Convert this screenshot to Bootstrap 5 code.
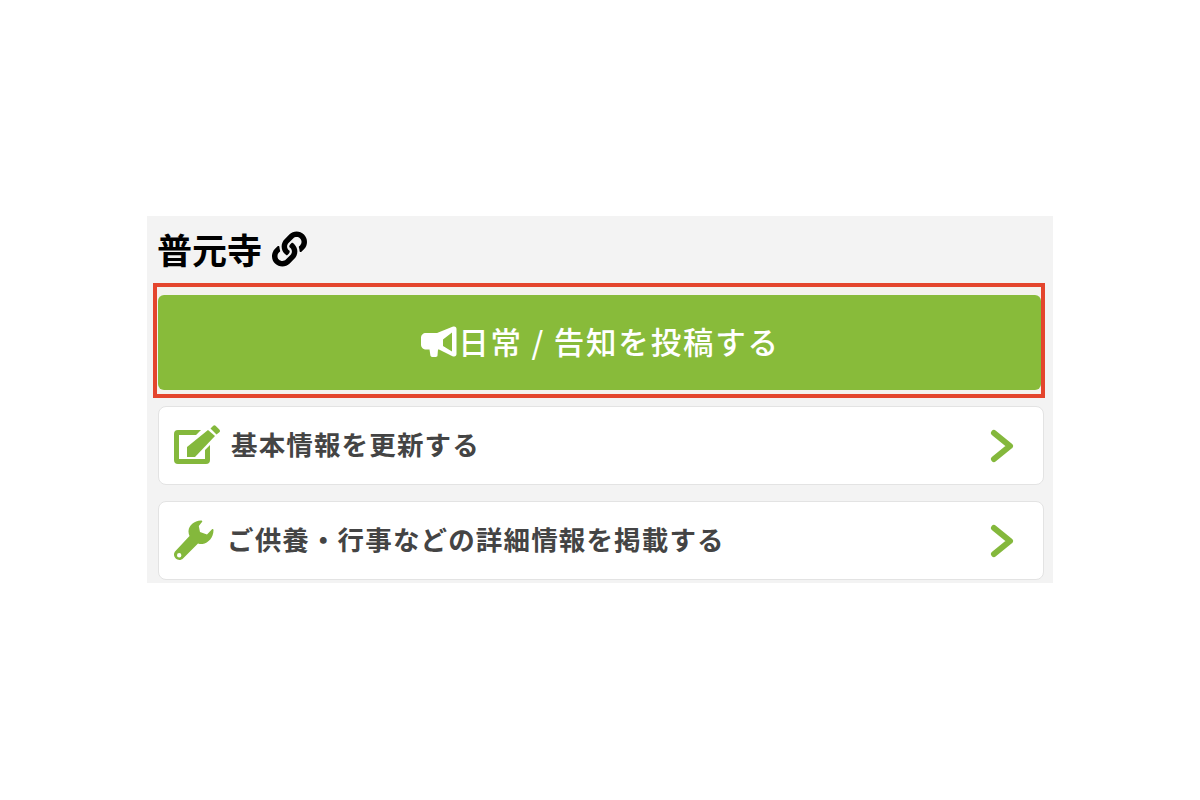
<!DOCTYPE html>
<html lang="ja">
<head>
<meta charset="utf-8">
<title>普元寺</title>
<link href="https://cdn.jsdelivr.net/npm/bootstrap@5.3.0/dist/css/bootstrap.min.css" rel="stylesheet">
<style>
html,body{height:100%;background:#fff;}
body{font-family:"Noto Sans CJK JP","Liberation Sans",sans-serif;padding-top:216px;}
.panel-wrap{width:906px;height:367px;margin-left:147px;background:#f3f3f3;overflow:hidden;padding:0 8px 0 6px;}
.temple-title{height:67px;padding-left:4px;font-size:35px;font-weight:700;color:#000;margin:0;padding-bottom:1px;gap:10px;}
.temple-title svg{width:35px;height:36px;}
.post-frame{height:115px;border:4px solid #e4452d;padding:8px 0 4px 1px;background:#f4f2ee;margin-bottom:8px;}
.post-btn{height:95px;background:#88bb3a;border-radius:6px;color:#fff;font-size:30.500px;font-weight:500;letter-spacing:1.8px;border:0;padding:0 0 2px 2px;}
.post-btn:hover,.post-btn:active{background:#88bb3a;color:#fff;}
.post-btn svg{width:36px;height:32px;margin-right:1px;}
.menu-card{height:79px;width:886px;margin-left:5px;margin-bottom:16px;background:#fff;border:1.5px solid #e3e3e3;border-radius:8px;color:#444;font-size:26.5px;font-weight:700;letter-spacing:1.15px;padding:0 28px 4px 15px;text-decoration:none;}
.menu-card:hover{color:#444;}
.menu-ico{fill:#84b83c;flex:none;margin-top:4px;}
.arrow-ico{width:26px;height:36px;fill:none;stroke:#84b83c;stroke-width:6;stroke-linecap:round;stroke-linejoin:round;flex:none;margin-top:4px;}
.first-label{margin-left:11px;}
.second-label{margin-left:12px;}
</style>
</head>
<body>
<div class="panel-wrap">
  <h1 class="temple-title d-flex align-items-center">普元寺
    <svg viewBox="0 0 512 512" fill="#000" aria-hidden="true"><path d="M326.612 185.391c59.747 59.809 58.927 155.698.36 214.59-.11.12-.24.25-.36.37l-67.2 67.2c-59.27 59.27-155.699 59.262-214.96 0-59.27-59.26-59.27-155.7 0-214.96l37.106-37.106c9.84-9.84 26.786-3.3 27.294 10.606.648 17.722 3.826 35.527 9.69 52.721 1.986 5.822.567 12.262-3.783 16.612l-13.087 13.087c-28.026 28.026-28.905 73.66-1.155 101.96 28.024 28.579 74.086 28.749 102.325.51l67.2-67.19c28.191-28.191 28.073-73.757 0-101.83-3.701-3.694-7.429-6.564-10.341-8.569a16.037 16.037 0 0 1-6.947-12.606c-.396-10.567 3.348-21.456 11.698-29.806l21.054-21.055c5.521-5.521 14.182-6.199 20.584-1.731a152.482 152.482 0 0 1 20.522 17.197zM467.547 44.449c-59.261-59.262-155.69-59.27-214.96 0l-67.2 67.2c-.12.12-.25.25-.36.37-58.566 58.892-59.387 154.781.36 214.59a152.454 152.454 0 0 0 20.521 17.196c6.402 4.468 15.064 3.789 20.584-1.731l21.054-21.055c8.35-8.35 12.094-19.239 11.698-29.806a16.037 16.037 0 0 0-6.947-12.606c-2.912-2.005-6.64-4.875-10.341-8.569-28.073-28.073-28.191-73.639 0-101.83l67.2-67.19c28.239-28.239 74.3-28.069 102.325.51 27.75 28.3 26.872 73.934-1.155 101.96l-13.087 13.087c-4.35 4.35-5.769 10.79-3.783 16.612 5.864 17.194 9.042 34.999 9.69 52.721.509 13.906 17.454 20.446 27.294 10.606l37.106-37.106c59.271-59.259 59.271-155.699.001-214.959z"/></svg>
  </h1>
  <div class="post-frame">
    <a href="#" class="btn post-btn d-flex align-items-center justify-content-center">
      <svg viewBox="0 0 36 32" fill="#fff" aria-hidden="true"><path fill-rule="evenodd" d="M5 7h11L31.500.8C34 -.2 35.500 1 35.500 3v25c0 2-1.500 3.200-4 2.200L18 23.500l-1 .1 -.5 6c0 1-.8 1.400-1.600 1.400h-3.800c-.9 0-1.500-.5-1.700-1.400L8.500 23.500H5c-3 0-5-2.300-5-5V12c0-3 2-5 5-5zM22 13.500v6.500l9 5.500V6.500z"/></svg>
      <span>日常 / 告知を投稿する</span>
    </a>
  </div>
  <a href="#" class="menu-card d-flex align-items-center">
    <svg class="menu-ico" width="46" height="41" viewBox="0 0 46 41" aria-hidden="true"><path d="M5 5h22l-5 5H5v24h26V25l5-5v15a4 4 0 0 1-4 4H4a4 4 0 0 1-4-4V9a4 4 0 0 1 4-4z"/><path d="M13 22 34 5l7 6-20 21h-8z"/><path d="M36.500 3.500l2.500-2.500a2 2 0 0 1 2.800 0l3.500 3.500a2 2 0 0 1 0 2.800L42.500 9.500z"/></svg>
    <span class="flex-grow-1 first-label">基本情報を更新する</span>
    <svg class="arrow-ico" viewBox="0 0 26 36" aria-hidden="true"><path d="M5 5l16 13L5 31"/></svg>
  </a>
  <a href="#" class="menu-card d-flex align-items-center">
    <svg class="menu-ico" width="41" height="41" viewBox="0 0 41 41" aria-hidden="true"><path fill-rule="evenodd" d="M27 .5C20 1 15 5 14.500 11c-.1 2 .3 3.500 1 5L1.500 31c-2 2-2 5 0 7.300 2.300 2.200 5.500 2.200 7.500.2l15-15c1.500.5 3 .7 4.500.5 6-1 11-6.500 11-14 0-1-1-1.200-1.500-.7L33 14.500 26 12l-1.200-6L28 2c.8-1 0-1.500-1-1.500zM5.200 33a2.200 2.200 0 1 0 0 4.400 2.200 2.200 0 0 0 0-4.400z"/></svg>
    <span class="flex-grow-1 second-label">ご供養・行事などの詳細情報を掲載する</span>
    <svg class="arrow-ico" viewBox="0 0 26 36" aria-hidden="true"><path d="M5 5l16 13L5 31"/></svg>
  </a>
</div>
</body>
</html>
